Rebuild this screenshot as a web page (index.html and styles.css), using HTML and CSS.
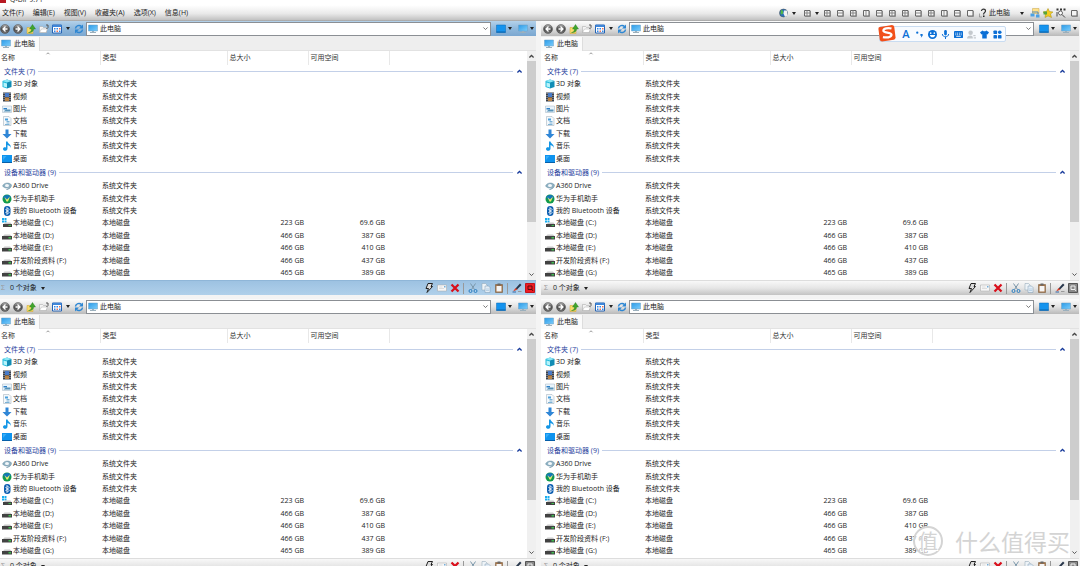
FILE: index.html
```
<!DOCTYPE html>
<html lang="zh-CN">
<head>
<meta charset="utf-8">
<title>Q-Dir</title>
<link rel="stylesheet" href="styles.css">
</head>
<body>
<svg class="sprite" aria-hidden="true">
  <defs>
    <linearGradient id="g-ball" x1="0" y1="0" x2="0" y2="1"><stop offset="0" stop-color="#b5b5b5"/><stop offset=".5" stop-color="#4b4b4b"/><stop offset="1" stop-color="#777"/></linearGradient>
    <linearGradient id="g-screen" x1="0" y1="0" x2="1" y2="1"><stop offset="0" stop-color="#2b9be8"/><stop offset="1" stop-color="#7ccdfb"/></linearGradient>
  </defs>
  <symbol id="back" viewBox="0 0 20 20"><circle cx="10" cy="10" r="9" fill="url(#g-ball)" stroke="#444"/><path d="M11 5 6 10l5 5M6 10h9" fill="none" stroke="#fff" stroke-width="2.6"/></symbol>
  <symbol id="forward" viewBox="0 0 20 20"><circle cx="10" cy="10" r="9" fill="url(#g-ball)" stroke="#444"/><path d="m9 5 5 5-5 5M14 10H5" fill="none" stroke="#fff" stroke-width="2.6"/></symbol>
  <symbol id="up" viewBox="0 0 20 20"><path d="M2 7h12v12H2z" fill="#f9dc6c" stroke="#d2a22c"/><path d="M5 17c5-1 6-4 6-7H7l6-9 6 9h-4c0 5-4 8-10 7z" fill="#3fa52d" stroke="#237a1b" stroke-width=".8"/></symbol>
  <symbol id="folder" viewBox="0 0 20 20"><path d="M1 5h6l2 2h6v10H1z" fill="#f4f4f4" stroke="#a3a3a3"/><path d="m1 17 4-7h12l-3 7z" fill="#fff" stroke="#aaa"/><path d="M14 2h4v5l-3 3" fill="none" stroke="#555" stroke-width="2"/></symbol>
  <symbol id="view" viewBox="0 0 20 20"><path d="M1 2h18v16H1z" fill="#fff" stroke="#2463b4" stroke-width="2"/><path d="M1 2h18v4H1z" fill="#3f86d8"/><path d="M4 8h3v3H4zM9 8h3v3H9zM4 13h3v3H4zM14 13h3v3h-3z" fill="#3387e6"/><path d="M14 8h3v3h-3zM9 13h3v3H9z" fill="#e5735a"/></symbol>
  <symbol id="refresh" viewBox="0 0 20 20"><path d="M3 9a7 7 0 0 1 12-4M17 11a7 7 0 0 1-12 4" fill="none" stroke="#2c86d3" stroke-width="3"/><path d="M18 1v8h-8zM2 19v-8h8z" fill="#2c86d3"/></symbol>
  <symbol id="pc" viewBox="0 0 20 20"><path d="M1 2h18v12H1z" fill="url(#g-screen)" stroke="#6c9fc2"/><path d="M8 14h4v2h4v2H4v-2h4z" fill="#9bb0bd"/></symbol>
  <symbol id="screen" viewBox="0 0 20 20"><path d="M1 2h18v15H1z" fill="#1493ee" stroke="#0b6bb6"/><path d="M1 15h18v2H1z" fill="#0a63ad"/></symbol>
  <symbol id="cube" viewBox="0 0 20 20"><path d="m1 4 9-3v18l-9-3z" fill="#20b9db"/><path d="m10 1 9 3v12l-9 3z" fill="#128db5"/><path d="m1 4 9-3 9 3-9 3z" fill="#8be7f6"/><path d="M3 7l7 2v8l-7-2z" fill="#b6f3fb"/></symbol>
  <symbol id="video" viewBox="0 0 20 20"><path d="M2 1h16v18H2z" fill="#39404b"/><path d="M6 2h8v8H6z" fill="#477ac9"/><path d="M6 11h8v7H6z" fill="#b98244"/><path d="M4 2v16M16 2v16" stroke="#ddd" stroke-width="1.6" stroke-dasharray="2 2"/></symbol>
  <symbol id="picture" viewBox="0 0 20 20"><path d="M1 4h18v13H1z" fill="#e9f4fb" stroke="#a1b3c0"/><path d="M3 8h7v3H3z" fill="#2c7fc7"/><path d="m3 15 5-4 9 0v4z" fill="#5792b8"/></symbol>
  <symbol id="doc" viewBox="0 0 20 20"><path d="M3 1h11l4 4v14H3z" fill="#f4f8fb" stroke="#98a8b4"/><path d="M6 5h6v4H6z" fill="#4ba0dc"/><path d="M9 11h6M9 14h6M6 17h9" stroke="#5d9fcd" stroke-width="1.6"/></symbol>
  <symbol id="down" viewBox="0 0 20 20"><path d="M7 1h6v9h6l-9 9-9-9h6z" fill="#2f86d6"/></symbol>
  <symbol id="music" viewBox="0 0 20 20"><path d="M8 1h3c1 5 8 5 6 13 0-4-3-5-6-6v7c0 6-9 6-9 1 0-3 3-4 6-3z" fill="#1496e6"/></symbol>
  <symbol id="desktop" viewBox="0 0 20 20"><path d="M0 2h20v16H0z" fill="#0f93ee"/><path d="M0 16h20v2H0z" fill="#075fa8"/><path d="M2 4h7L2 12z" fill="#38aef8"/></symbol>
  <symbol id="cloud" viewBox="0 0 20 20"><path d="M1 10C4 3 15 2 19 8c0 6-6 9-10 9 3-1 6-3 6-5-3 3-10 3-14-2z" fill="#8fb2c4" stroke="#6a8fa3"/><ellipse cx="10" cy="9" rx="4" ry="3" fill="#f3f7fa"/></symbol>
  <symbol id="ball" viewBox="0 0 20 20"><circle cx="10" cy="10" r="9" fill="#119a4b"/><path d="M2 6c4-5 12-6 16 0l-8 9z" fill="#1377b8"/><path d="m5 6 5 5 6-6-4 10H9z" fill="#e7f067"/></symbol>
  <symbol id="bluetooth" viewBox="0 0 20 20"><rect x="4" y="0" width="13" height="20" rx="6.5" fill="#0b5db0"/><path d="m7 6 7 7-4 4V3l4 4-7 7" fill="none" stroke="#fff" stroke-width="1.8"/></symbol>
  <symbol id="disk" viewBox="0 0 20 20"><path d="m2 10 3-3h11l3 3z" fill="#c9c9c9"/><path d="M0 10h20v7H0z" fill="#424242"/><path d="M13 12h5v3h-5z" fill="#3fbb4f"/></symbol>
  <symbol id="disk-os" viewBox="0 0 20 20"><path d="M0 0h4v4H0zM5 0h4v4H5zM0 5h4v4H0zM5 5h4v4H5z" fill="#18aef0"/><path d="m4 12 2-3h11l2 3z" fill="#c9c9c9"/><path d="M2 12h18v6H2z" fill="#424242"/><path d="M13 14h5v2h-5z" fill="#3fbb4f"/></symbol>
  <symbol id="bolt" viewBox="0 0 20 20"><path d="M8 1h9l-3 6h3L6 19l3-8H4z" fill="#ddd" stroke="#222" stroke-width="2"/></symbol>
  <symbol id="mail" viewBox="0 0 20 20"><path d="M1 4h18v12H1z" fill="#f7f7f7" stroke="#a5a5a5"/><path d="M4 8h7M4 11h10" stroke="#c2c2c2"/><path d="M14 6h3v3h-3z" fill="#74aeda"/></symbol>
  <symbol id="cross" viewBox="0 0 20 20"><path d="m3 3 14 14M17 3 3 17" stroke="#d90f1b" stroke-width="4.5"/></symbol>
  <symbol id="cut" viewBox="0 0 20 20"><path d="m5 1 8 12M15 1 7 13" stroke="#7b97aa" stroke-width="2"/><circle cx="5" cy="16" r="3" fill="none" stroke="#2c7ec0" stroke-width="2"/><circle cx="15" cy="16" r="3" fill="none" stroke="#2c7ec0" stroke-width="2"/></symbol>
  <symbol id="copy" viewBox="0 0 20 20"><path d="M2 1h7l3 3v10H2z" fill="#eef3f7" stroke="#8aa0b2"/><path d="M8 6h7l3 3v10H8z" fill="#e3edf6" stroke="#7c98b0"/><path d="M10 12h6M10 15h6" stroke="#8db4d4"/></symbol>
  <symbol id="paste" viewBox="0 0 20 20"><path d="M3 3h14v16H3z" fill="#a77345" stroke="#71502f"/><path d="M5 6h10v11H5z" fill="#f5f5f5"/><path d="M7 1h6v4H7z" fill="#666"/></symbol>
  <symbol id="brush" viewBox="0 0 20 20"><path d="m7 11 9-10 3 3-9 9z" fill="#27364b"/><path d="m2 17 5-7 4 3z" fill="#d5402b"/><path d="M12 17h7" stroke="#999" stroke-width="2"/><path d="M1 18h7" stroke="#356aa9" stroke-width="2"/></symbol>
  <symbol id="pin" viewBox="0 0 20 20"><path d="M1 1h18v18H1z" class="pin-frame"/><path d="M6 6h8v7H6zM14 13l2 3" class="pin-mark"/></symbol>
  <symbol id="globe" viewBox="0 0 20 20"><circle cx="9" cy="10" r="8" fill="#2a71b8" stroke="#444"/><path d="M4 4c4 0 5 3 4 6s-3 4-5 1z" fill="#4fb54b"/><path d="M10 5h6l1 10-5 3-3-7z" fill="#f1f1f1"/></symbol>
  <symbol id="help" viewBox="0 0 20 20"><path d="M7 6c0-5 8-5 8 0 0 3-4 3-4 7" fill="none" stroke="#333" stroke-width="2.4"/><path d="M10 15h3v3h-3z" fill="#222"/><path d="M3 11v7h5" fill="none" stroke="#888" stroke-width="1.5"/></symbol>
  <symbol id="net" viewBox="0 0 20 20"><path d="M5 1h13v10H5z" fill="#ffe18a" stroke="#c7a544"/><path d="M1 11h8v6H1zM12 13h7v6h-7z" fill="#4aa1e4"/><path d="M4 8h12v5" fill="none" stroke="#5287b4" stroke-width="2"/></symbol>
  <symbol id="star" viewBox="0 0 20 20"><path d="m10 1 3 6 7 1-5 4 2 7-7-3-6 3 1-7-5-4 7-1z" fill="#f3cb20" stroke="#a68c14"/><path d="M1 7h7v6H1z" fill="#57a53a"/></symbol>
  <symbol id="find" viewBox="0 0 20 20"><path d="M1 1h4v4H1zM8 1h4v4H8zM15 1h4v4h-4z" fill="#333"/><circle cx="9" cy="10" r="4" fill="#fff" stroke="#444" stroke-width="1.6"/><path d="m12 13 6 6M2 8v9" stroke="#444" stroke-width="2"/></symbol>
  <symbol id="pane" viewBox="0 0 20 20"><path d="M5 5h11v11H5z" fill="#f4f4f4" stroke="#666" stroke-width="2"/><path d="M17 6v11H6" fill="none" stroke="#888" stroke-width="2"/></symbol>
  <symbol id="pane-h" viewBox="0 0 20 20"><use href="#pane"/><path d="M5 10h11" stroke="#888" stroke-width="2"/></symbol>
  <symbol id="pane-v" viewBox="0 0 20 20"><use href="#pane"/><path d="M10 5v11" stroke="#888" stroke-width="2"/></symbol>
  <symbol id="pane-4" viewBox="0 0 20 20"><use href="#pane"/><path d="M10 5v11M5 10h11" stroke="#888" stroke-width="2"/></symbol>
  <symbol id="chev-down" viewBox="0 0 20 20"><path d="m4 7 6 6 6-6" fill="none" stroke="currentColor" stroke-width="2.5"/></symbol>
  <symbol id="chev-up" viewBox="0 0 20 20"><path d="m4 13 6-6 6 6" fill="none" stroke="currentColor" stroke-width="3.5"/></symbol>
</svg>

<header class="app-head">
  <div class="titlebar"><span class="app-logo"></span><span class="app-title">Q-Dir 9.71</span></div>
  <div class="menubar">
    <nav class="menus">
      <button>文件(F)</button><button>编辑(E)</button><button>视图(V)</button><button>收藏夹(A)</button><button>选项(X)</button><button>信息(H)</button>
    </nav>
    <div class="quick">
      <button class="ib" aria-label="网络"><svg class="ico"><use href="#globe"/></svg></button><button class="arrow" aria-label="更多"></button>
      <button class="ib" aria-label="布局"><svg class="ico"><use href="#pane-4"/></svg></button><button class="arrow" aria-label="更多布局"></button>
      <span class="layouts" id="layouts"></span>
      <button class="ib" aria-label="帮助"><svg class="ico"><use href="#help"/></svg></button>
      <button class="place">此电脑</button><button class="arrow" aria-label="位置"></button>
      <button class="ib" aria-label="映射"><svg class="ico"><use href="#net"/></svg></button>
      <button class="ib" aria-label="收藏"><svg class="ico"><use href="#star"/></svg></button>
      <button class="ib" aria-label="查找"><svg class="ico"><use href="#find"/></svg></button>
      <button class="ib" aria-label="窗口"><svg class="ico"><use href="#pane"/></svg></button>
    </div>
  </div>
</header>

<main class="desk" id="desk"></main>

<template id="pane-template">
  <section class="pane">
    <div class="toolbar">
      <button class="ib" aria-label="后退"><svg class="ico"><use href="#back"/></svg></button>
      <button class="ib" aria-label="前进"><svg class="ico"><use href="#forward"/></svg></button>
      <button class="ib" aria-label="向上"><svg class="ico"><use href="#up"/></svg></button>
      <button class="ib" aria-label="文件夹"><svg class="ico"><use href="#folder"/></svg></button>
      <button class="ib" aria-label="视图"><svg class="ico"><use href="#view"/></svg></button>
      <button class="arrow" aria-label="视图选项"></button>
      <button class="ib" aria-label="刷新"><svg class="ico"><use href="#refresh"/></svg></button>
      <div class="address">
        <svg class="ico"><use href="#pc"/></svg>
        <input type="text" value="此电脑" aria-label="地址">
        <button class="ib" aria-label="历史"><svg class="ico-s"><use href="#chev-down"/></svg></button>
      </div>
      <div class="places">
        <button class="ib" aria-label="桌面"><svg class="ico"><use href="#screen"/></svg></button><button class="arrow" aria-label="桌面选项"></button>
        <button class="ib second" aria-label="电脑"><svg class="ico"><use href="#pc"/></svg></button><button class="arrow" aria-label="电脑选项"></button>
      </div>
    </div>
    <div class="tabs"><button class="tab"><svg class="ico"><use href="#pc"/></svg>此电脑</button></div>
    <div class="view">
      <table class="files">
        <colgroup><col class="c-name"><col class="c-type"><col class="c-num"><col class="c-num"><col></colgroup>
        <thead><tr><th class="sorted">名称<svg class="sort"><use href="#chev-up"/></svg></th><th>类型</th><th>总大小</th><th>可用空间</th><th></th></tr></thead>
      </table>
      <div class="scroll"><svg class="ico-s"><use href="#chev-up"/></svg><span class="thumb"></span><svg class="ico-s end"><use href="#chev-down"/></svg></div>
    </div>
    <div class="status">
      <span class="sigma">Σ</span><button class="count">0 个对象</button><button class="arrow" aria-label="对象"></button>
      <span class="fill"></span>
      <button class="ib" aria-label="快速"><svg class="ico"><use href="#bolt"/></svg></button>
      <button class="ib" aria-label="重命名"><svg class="ico"><use href="#mail"/></svg></button>
      <button class="ib" aria-label="删除"><svg class="ico"><use href="#cross"/></svg></button>
      <span class="sep"></span>
      <button class="ib" aria-label="剪切"><svg class="ico"><use href="#cut"/></svg></button>
      <button class="ib" aria-label="复制"><svg class="ico"><use href="#copy"/></svg></button>
      <button class="ib" aria-label="粘贴"><svg class="ico"><use href="#paste"/></svg></button>
      <span class="sep"></span>
      <button class="ib" aria-label="颜色"><svg class="ico"><use href="#brush"/></svg></button>
      <button class="ib" aria-label="窗格"><svg class="ico pin"><use href="#pin"/></svg></button>
    </div>
  </section>
</template>

<aside class="ime" aria-label="输入法">
  <svg class="ime-logo" viewBox="0 0 40 40"><path d="m2 7 29-5q4 0 5 4l3 24q0 4-4 5l-26 4q-4 0-5-4L1 11q0-3 1-4z" fill="#f1501b"/><path d="M30 10c-8-2-18 0-18 5 0 6 18 2 18 9 0 6-12 7-19 5" fill="none" stroke="#fff" stroke-width="5"/></svg>
  <span class="ime-letter">A</span>
  <svg class="ime-ico" viewBox="0 0 20 20"><circle cx="5" cy="6" r="2.5"/><path d="M12 9h5v4l-4 4 1-4h-2z"/></svg>
  <svg class="ime-ico" viewBox="0 0 20 20"><circle cx="10" cy="10" r="10"/><circle cx="6" cy="7" r="1.8" fill="#fff"/><circle cx="14" cy="7" r="1.8" fill="#fff"/><path d="M4 11h12c-1 7-11 7-12 0z" fill="#fff"/></svg>
  <svg class="ime-ico" viewBox="0 0 20 20"><rect x="7" y="0" width="6" height="12" rx="3"/><path d="M3 9c0 8 14 8 14 0M10 15v5" fill="none" stroke="#0b6fd6" stroke-width="2.2"/></svg>
  <svg class="ime-ico" viewBox="0 0 20 20"><rect x="0" y="2" width="20" height="16" rx="2"/><path d="M3 7h14M3 10.500h14" stroke="#fff" stroke-width="2" stroke-dasharray="2 2"/><path d="M5 14h10" stroke="#fff" stroke-width="2"/></svg>
  <svg class="ime-ico off" viewBox="0 0 20 20"><circle cx="8" cy="6" r="5"/><path d="M0 19c0-9 13-9 13-2v2zM14 11h5v3h-5zM15 16h5v3h-5z"/></svg>
  <svg class="ime-ico" viewBox="0 0 20 20"><path d="M6 1q4 4 8 0l6 4-3 5-2-1v10H5V9l-2 1-3-5z"/></svg>
  <svg class="ime-ico" viewBox="0 0 20 20"><rect x="1" y="1" width="8" height="8" rx="2"/><circle cx="15" cy="5" r="4"/><rect x="1" y="11" width="8" height="8" rx="2"/><rect x="11" y="11" width="8" height="8" rx="2"/></svg>
</aside>

<div class="watermark"><span class="seal">值</span><span>什么值得买</span></div>
<script src="app.js"></script>
</body>
</html>
```

FILE: styles.css
```
* { box-sizing: border-box; }

body {
  margin: 0;
  height: 100vh;
  overflow: hidden;
  position: relative;
  background: #f4f4f4;
  color: #1c1c1c;
  font: 7px/12px "Open Sans", "Noto Sans CJK SC", sans-serif;
}

button, input {
  margin: 0;
  padding: 0;
  border: 0;
  background: none;
  color: inherit;
  font: inherit;
}

.sprite { position: absolute; width: 0; height: 0; }
.ico { display: block; width: 10px; height: 10px; flex: none; }
.ico-s { display: block; width: 7px; height: 7px; flex: none; }

.ib {
  display: flex;
  flex: none;
  align-items: center;
  justify-content: center;
  width: 13px;
  height: 13px;
}

.arrow {
  display: flex;
  flex: none;
  align-items: center;
  justify-content: center;
  width: 7px;
  height: 13px;
}
.arrow::before {
  content: "";
  border: 2px solid transparent;
  border-top: 3px solid #222;
  border-bottom: 0;
}

/* Title and menus */
.app-head { background: linear-gradient(#fff 0, #fff 25%, #e9e9e9 65%, #c2c2c2 95%, #999 100%); }
.titlebar {
  display: flex;
  align-items: flex-end;
  gap: 4px;
  height: 5px;
  overflow: hidden;
}
.app-logo { width: 6px; height: 4px; margin-bottom: 2px; background: #b71922; }
.app-title { line-height: 10px; }
.menubar { display: flex; justify-content: space-between; height: 16px; align-items: center; }
.menus { display: flex; gap: 9px; padding-left: 2px; }
.quick { display: flex; align-items: center; }
.quick .arrow { margin-right: 3px; }
.quick .arrow:has(+ .layouts) { margin-right: 0; }
.layouts { display: flex; }
.place { padding: 0 5px 0 0; }
.quick .place + .arrow { margin-left: 3px; }

/* Four panes */
.desk {
  display: grid;
  grid-template-columns: 1fr 1fr;
  gap: 4px 5px;
  margin: 0 1px 0 -2px;
}
.pane { display: flex; flex-direction: column; background: #fff; min-width: 0; }

.toolbar {
  display: flex;
  align-items: center;
  height: 15px;
  background: linear-gradient(#fcfcfc, #e3e3e3 50%, #b9b9b9);
}
.pane.active .toolbar { background: linear-gradient(#b4d2ea, #8fb8dc 50%, #7ba7d0); }
.toolbar > .arrow { width: 9px; }
.address {
  display: flex;
  flex: 1;
  align-items: center;
  height: 14px;
  margin-left: 1px;
  padding-left: 1px;
  border: 1px solid #8b8f94;
  background: #fff;
}
.address input { flex: 1; min-width: 0; height: 12px; padding-left: 2px; }
.address .ib { width: 9px; color: #666; }
.places { display: flex; padding: 0 1px 0 3px; }
.places .arrow { width: 6px; }
.places .second { margin-left: 3px; }

.tabs { display: flex; align-items: flex-end; height: 15px; background: #eee; border-bottom: 1px solid #e2e2e2; }
.tab {
  display: flex;
  align-items: center;
  gap: 3px;
  height: 14px;
  margin-bottom: -1px;
  padding: 0 4px 0 3px;
  border-right: 1px solid #ddd;
  background: #fbfbfb;
}

.view { display: flex; height: 229px; padding-left: 2px; }
.files {
  flex: 1;
  width: 0;
  height: 228px;
  table-layout: fixed;
  border-collapse: collapse;
}
.c-name { width: 100px; }
.c-type { width: 127px; }
.c-num { width: 81px; }
.files th, .files td {
  padding: 0;
  text-align: left;
  font-weight: 400;
  white-space: nowrap;
  vertical-align: middle;
  line-height: 12px;
}
.files thead th { height: 14px; padding-left: 2px; border-right: 1px solid #e8e8e8; color: #333; }
.files thead th:first-child { padding-left: 1px; }
.files thead th:last-child { border: 0; }
.sorted { position: relative; }
.sort { position: absolute; left: 45px; top: 0; width: 6px; height: 5px; color: #888; }

.files tbody tr { height: 12px; }
.files tbody tr:nth-child(5n + 3), .files tbody tr:nth-child(5n + 6) { height: 13px; }
.files tbody tr.group { height: 13px; }
.files tbody + tbody tr.group { height: 15px; }
.files td:nth-child(2) { padding-left: 2px; }
.files td:nth-child(n + 3) { padding-right: 4px; text-align: right; }
.group-line { display: flex; align-items: center; gap: 3px; padding: 0 4px; color: #26419c; }
.group-line::after { content: ""; order: 1; flex: 1; height: 1px; background: #c3d0e8; }
.group-line svg { order: 2; color: #16399a; }
.item { display: flex; align-items: center; gap: 1px; padding-left: 2px; }

.scroll { display: flex; flex-direction: column; align-items: center; width: 9px; padding: 2px 0; background: #f0f0f0; color: #444; }
.thumb { width: 9px; height: 161px; margin-top: 1px; background: #cdcdcd; }
.end { margin-top: auto; }

.status {
  display: flex;
  align-items: center;
  height: 15px;
  border-top: 1px solid #ddd;
  background: linear-gradient(#f8f8f8, #e6e6e6 50%, #c3c3c3);
}
.pane.active .status { border-color: #8fb6d8; background: linear-gradient(#9dc2e2, #b0d0ea); }
.sigma { width: 12px; padding-left: 3px; color: #999; }
.status .arrow { margin-left: 3px; }
.fill { flex: 1; }
.sep { width: 1px; height: 11px; margin: 0 2px; background: #999; }
.pin { --pin: #8a8a8a; --pin-edge: #555; --pin-mark: #eee; }
.pane.active .pin { --pin: #ed1c24; --pin-edge: #c4141b; --pin-mark: #5d0a0d; }
.pin-frame { fill: var(--pin); stroke: var(--pin-edge); stroke-width: 2; }
.pin-mark { fill: none; stroke: var(--pin-mark); stroke-width: 2; }

/* Floating input-method bar */
.ime {
  position: absolute;
  top: 26px;
  right: 74px;
  display: flex;
  align-items: center;
  gap: 4px;
  height: 16px;
  padding-right: 3px;
  border: 1px solid #c9dcf1;
  border-radius: 2px;
  background: #f8fbff;
}
.ime-logo { width: 18px; height: 18px; margin: 0 1px 2px -2px; }
.ime-letter { width: 10px; color: #0b6fd6; font: 600 11px/14px "Open Sans", sans-serif; text-align: center; }
.ime-ico { width: 9px; height: 9px; fill: #0b6fd6; }
.ime-ico.off { fill: #c4c9ce; }

.watermark {
  position: absolute;
  right: 10px;
  bottom: 10px;
  display: flex;
  align-items: center;
  gap: 12px;
  color: #d4d4d4;
  font: 23px/30px "Noto Sans CJK SC", sans-serif;
  text-shadow: 1px 1px 0 #fff;
}
.seal {
  width: 30px;
  height: 30px;
  border: 2px solid #d4d4d4;
  border-radius: 50%;
  background: rgba(255, 255, 255, .6);
  font-size: 20px;
  line-height: 26px;
  text-align: center;
}
```

FILE: app.js
```
const groups = [
  { title: '文件夹 (7)', rows: [
    ['cube', '3D 对象'], ['video', '视频'], ['picture', '图片'], ['doc', '文档'],
    ['down', '下载'], ['music', '音乐'], ['desktop', '桌面']
  ] },
  { title: '设备和驱动器 (9)', rows: [
    ['cloud', 'A360 Drive'], ['ball', '华为手机助手'], ['bluetooth', '我的 Bluetooth 设备'],
    ['disk-os', '本地磁盘 (C:)', '223 GB', '69.6 GB'],
    ['disk', '本地磁盘 (D:)', '466 GB', '387 GB'],
    ['disk', '本地磁盘 (E:)', '466 GB', '410 GB'],
    ['disk', '开发阶段资料 (F:)', '466 GB', '437 GB'],
    ['disk', '本地磁盘 (G:)', '465 GB', '389 GB']
  ] }
];

const row = ([icon, name, size = '', free = '']) => `
  <tr><td><span class="item"><svg class="ico"><use href="#${icon}"/></svg>${name}</span></td>
  <td>${size ? '本地磁盘' : '系统文件夹'}</td><td>${size}</td><td>${free}</td></tr>`;

const bodies = groups.map(g => `<tbody>
  <tr class="group"><th colspan="5"><span class="group-line">${g.title}<svg class="ico-s"><use href="#chev-up"/></svg></span></th></tr>
  ${g.rows.map(row).join('')}</tbody>`).join('');

const desk = document.getElementById('desk');
const template = document.getElementById('pane-template');
for (let i = 0; i < 4; i++) {
  const pane = template.content.cloneNode(true);
  pane.querySelector('.files').insertAdjacentHTML('beforeend', bodies);
  if (i === 0) pane.querySelector('.pane').classList.add('active');
  desk.append(pane);
}

const layouts = ['4', 'h', '4', 'v', 'h', '4', '4', 'h', '4', 'v', 'h', ''];
document.getElementById('layouts').innerHTML = layouts.map((k, i) =>
  `<button class="ib" aria-label="布局 ${i + 1}"><svg class="ico"><use href="#pane${k && '-' + k}"/></svg></button>`).join('');
```
